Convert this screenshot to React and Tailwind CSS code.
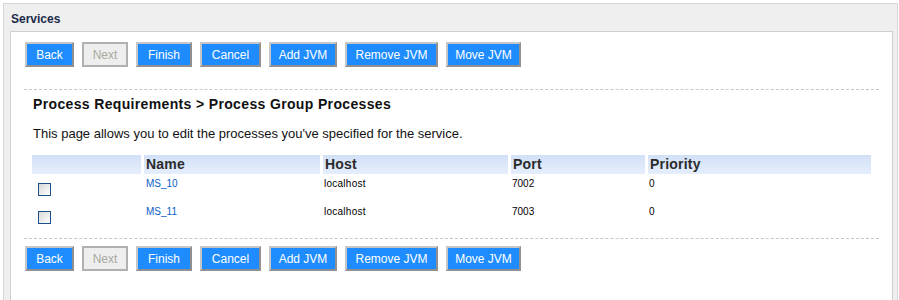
const buttons = [
  { label: 'Back', w: 'w-[49px]' },
  { label: 'Next', w: 'w-[46px]', disabled: true },
  { label: 'Finish', w: 'w-[56px]' },
  { label: 'Cancel', w: 'w-[61px]' },
  { label: 'Add JVM', w: 'w-[68px]' },
  { label: 'Remove JVM', w: 'w-[93px]' },
  { label: 'Move JVM', w: 'w-[75px]' },
]

const processes = [
  { name: 'MS_10', host: 'localhost', port: '7002', priority: '0' },
  { name: 'MS_11', host: 'localhost', port: '7003', priority: '0' },
]

const cols = 'grid grid-cols-[109px_176px_185px_134px_223px] gap-x-[3px]'

function ButtonBar() {
  return (
    <div className="flex gap-[8px] pl-px">
      {buttons.map((b) =>
        b.disabled ? (
          <button
            key={b.label}
            type="button"
            disabled
            className={`${b.w} h-[25px] border-2 border-[#b0b0b0] bg-[#eeeeee] text-[12px] leading-none text-[#a9a9a0]`}
          >
            {b.label}
          </button>
        ) : (
          <button
            key={b.label}
            type="button"
            className={`${b.w} h-[25px] border-2 border-t-[#c6c6c6] border-l-[#c6c6c6] border-b-[#909090] border-r-[#909090] bg-[#1e8cff] text-[12px] leading-none text-white`}
          >
            {b.label}
          </button>
        ),
      )}
    </div>
  )
}

export default function App() {
  return (
    <div className="bg-white pt-[3px] pl-[3px] font-['Liberation_Sans',Arial,sans-serif]">
      <div className="w-[895px] border border-[#d6d6d6] bg-[#efefef] pl-[6px] pr-[4px]">
        <h1 className="h-[27px] pl-[1px] pt-[8px] text-[12px] font-bold leading-[14px] text-[#1c2b4b]">Services</h1>
        <div className="h-[280px] border border-[#cfcfcf] bg-white pl-[13px] pt-[10px]">
          <ButtonBar />

          <div className="mt-[22px] w-[855px] border-t border-dashed border-[#c8c8c8]" />

          <div className="pl-[9px]">
            <h2 className="mt-[6px] text-[14px] font-bold leading-[17px] tracking-[0.35px] text-[#111]">
              Process Requirements &gt; Process Group Processes
            </h2>
            <p className="mt-[13px] text-[13px] leading-[16px] text-[#111]">
              This page allows you to edit the processes you&apos;ve specified for the service.
            </p>
          </div>

          <div className="mt-[13px] pl-[8px]">
            <div className={`${cols} h-[19px] text-[14px] font-bold leading-[19px] tracking-[0.2px] text-[#2b2b2b]`}>
              {['', 'Name', 'Host', 'Port', 'Priority'].map((h, i) => (
                <div key={i} className="bg-gradient-to-b from-[#d2e0f7] to-[#e5eefc] pl-[2px]">
                  {h}
                </div>
              ))}
            </div>
            {processes.map((p) => (
              <div key={p.name} className={`${cols} h-[28px] text-[10px] leading-[11px] text-black`}>
                <div className="pl-[6px] pt-[9px]">
                  <div className="h-[13px] w-[13px] border border-[#1d4f8b] bg-gradient-to-br from-[#d8d8d8] to-white" />
                </div>
                <div className="pl-[2px] pt-[4px]">
                  <a href="#" className="text-[10px] text-[#0b60c6]">
                    {p.name}
                  </a>
                </div>
                <div className="pl-[1px] pt-[4px] tracking-[0.25px]">{p.host}</div>
                <div className="pl-[1px] pt-[4px]">{p.port}</div>
                <div className="pl-[1px] pt-[4px]">{p.priority}</div>
              </div>
            ))}
          </div>

          <div className="mt-[8px] mb-[7px] w-[855px] border-t border-dashed border-[#c8c8c8]" />

          <ButtonBar />
        </div>
      </div>
    </div>
  )
}
